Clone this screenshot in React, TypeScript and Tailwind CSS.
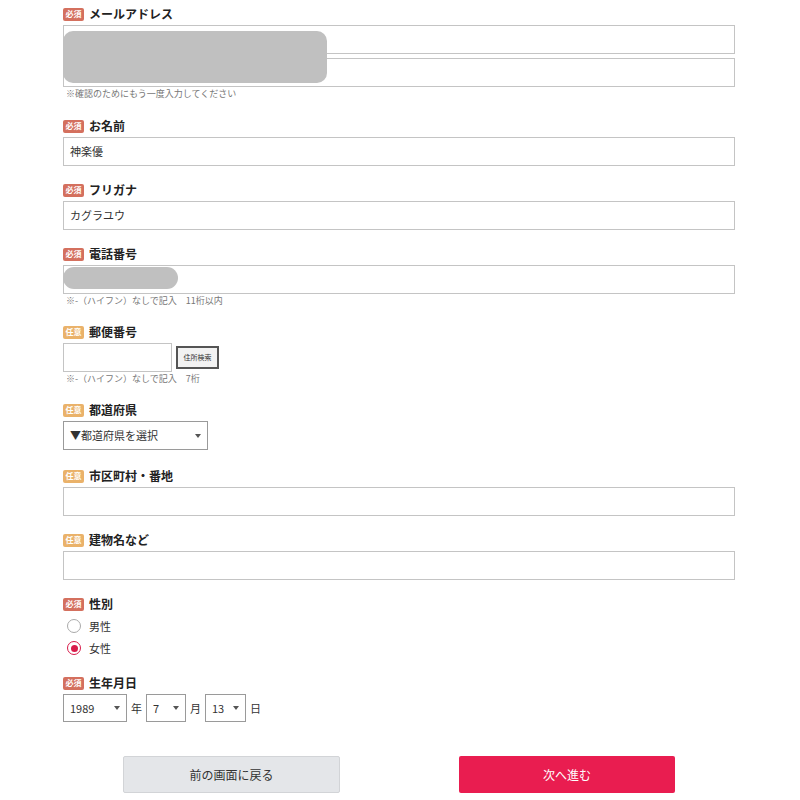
import React from 'react';

const font = { fontFamily: '"Noto Sans CJK JP", "Noto Sans", sans-serif' };

function Badge({ required }: { required: boolean }) {
  return (
    <span
      className={`inline-flex items-center justify-center w-[21px] h-[13px] rounded-[2px] text-[8px] leading-none text-white font-bold ${
        required ? 'bg-[#d4705e]' : 'bg-[#eab26a]'
      }`}
    >
      {required ? '必須' : '任意'}
    </span>
  );
}

function Label({ required, children }: { required: boolean; children: React.ReactNode }) {
  return (
    <div className="flex items-center gap-[5px] h-[16px] mb-[3px]">
      <Badge required={required} />
      <span className="text-[12px] font-bold text-[#222] leading-none">{children}</span>
    </div>
  );
}

function Field({ value, className = '' }: { value?: string; className?: string }) {
  return (
    <div
      className={`h-[29px] border border-[#c4c4c4] bg-white flex items-center px-[6px] text-[11px] text-[#333] ${className}`}
    >
      {value}
    </div>
  );
}

function Note({ children }: { children: React.ReactNode }) {
  return <p className="h-[12px] mt-[1px] pl-[3px] text-[9px] leading-[12px] text-[#777]">{children}</p>;
}

function Arrow() {
  return (
    <svg width="6" height="4" viewBox="0 0 6 4">
      <path d="M0 0h6L3 4z" fill="#555" />
    </svg>
  );
}

function Select({ value, className }: { value: string; className: string }) {
  return (
    <div
      className={`h-[28px] border border-[#9a9a9a] bg-white flex items-center justify-between pl-[6px] pr-[6px] text-[11px] text-[#333] ${className}`}
    >
      <span>{value}</span>
      <Arrow />
    </div>
  );
}

function Radio({ checked, label }: { checked: boolean; label: string }) {
  return (
    <div className="flex items-center h-[22px] pl-[4px] gap-[8px]">
      <span
        className={`w-[14px] h-[14px] rounded-full border flex items-center justify-center ${
          checked ? 'border-[#d81b4a] border-[1.5px]' : 'border-[#aaa]'
        }`}
      >
        {checked && <span className="w-[7px] h-[7px] rounded-full bg-[#d81b4a]" />}
      </span>
      <span className="text-[11px] text-[#333]">{label}</span>
    </div>
  );
}

export default function App() {
  return (
    <div className="w-[800px] h-[800px] bg-white overflow-hidden" style={font}>
      <div className="ml-[63px] w-[672px] pt-[6px]">
        {/* メールアドレス */}
        <Label required>メールアドレス</Label>
        <div className="relative">
          <Field />
          <Field className="mt-[4px]" />
          <div className="absolute left-0 top-[6px] w-[264px] h-[52px] rounded-[10px] bg-[#c0c0c0]" />
        </div>
        <Note>※確認のためにもう一度入力してください</Note>

        <div className="mt-[18px]">
          <Label required>お名前</Label>
          <Field value="神楽優" />
        </div>

        <div className="mt-[16px]">
          <Label required>フリガナ</Label>
          <Field value="カグラユウ" />
        </div>

        <div className="mt-[16px]">
          <Label required>電話番号</Label>
          <div className="relative">
            <Field />
            <div className="absolute left-0 top-[2px] w-[115px] h-[22px] rounded-full bg-[#c0c0c0]" />
          </div>
          <Note>※-（ハイフン）なしで記入　11桁以内</Note>
        </div>

        <div className="mt-[17px]">
          <Label required={false}>郵便番号</Label>
          <div className="flex items-center gap-[4px]">
            <Field className="w-[109px]" />
            <button className="h-[23px] w-[43px] border-2 border-[#555] bg-[#f2f2f2] text-[7px] text-[#333]">
              住所検索
            </button>
          </div>
          <Note>※-（ハイフン）なしで記入　7桁</Note>
        </div>

        <div className="mt-[17px]">
          <Label required={false}>都道府県</Label>
          <Select value="▼都道府県を選択" className="w-[145px] h-[29px] border-[#8c8c8c]" />
        </div>

        <div className="mt-[18px]">
          <Label required={false}>市区町村・番地</Label>
          <Field />
        </div>

        <div className="mt-[16px]">
          <Label required={false}>建物名など</Label>
          <Field />
        </div>

        <div className="mt-[16px]">
          <Label required>性別</Label>
          <div className="mt-[3px]">
            <Radio checked={false} label="男性" />
            <Radio checked label="女性" />
          </div>
        </div>

        <div className="mt-[16px]">
          <Label required>生年月日</Label>
          <div className="flex items-center text-[11px] text-[#333]">
            <Select value="1989" className="w-[64px]" />
            <span className="mx-[4px]">年</span>
            <Select value="7" className="w-[40px]" />
            <span className="mx-[4px]">月</span>
            <Select value="13" className="w-[41px]" />
            <span className="ml-[4px]">日</span>
          </div>
        </div>

        <div className="mt-[34px] flex justify-center gap-[119px]">
          <button className="w-[217px] h-[37px] bg-[#e4e6e9] border border-[#d2d4d7] rounded-[2px] text-[12px] text-[#333]">
            前の画面に戻る
          </button>
          <button className="w-[216px] h-[37px] bg-[#e91d50] rounded-[2px] text-[12px] text-white">
            次へ進む
          </button>
        </div>
      </div>
    </div>
  );
}
